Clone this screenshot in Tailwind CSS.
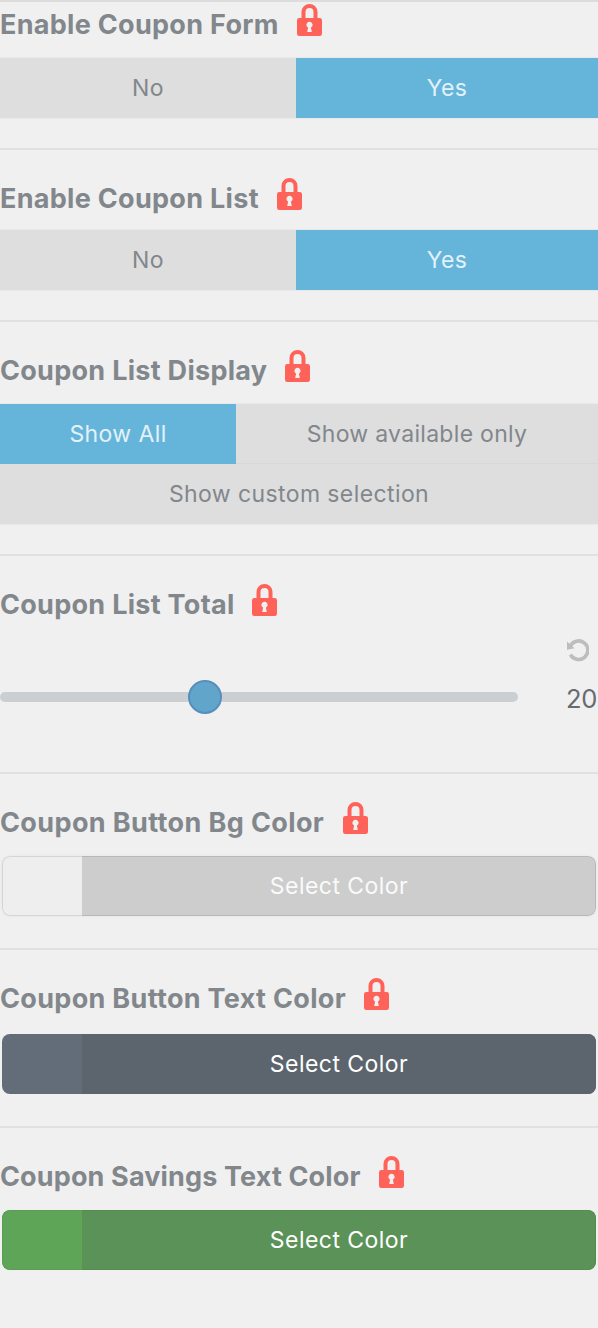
<!DOCTYPE html>
<html lang="en">
<head>
<meta charset="utf-8">
<title>Coupon Settings</title>
<script src="https://cdn.jsdelivr.net/npm/@tailwindcss/browser@4"></script>
</head>
<body class="bg-[#f0f0f0] font-['Inter',sans-serif] text-[#82878c] overflow-hidden">
<svg class="hidden">
  <symbol id="lock" viewBox="0 0 25 32">
    <path fill="#ff6259" fill-rule="evenodd" d="M4.500 14V8a8 8 0 0 1 16 0v6h2.200a2.300 2.300 0 0 1 2.300 2.300v13.400a2.300 2.300 0 0 1-2.300 2.300H2.300A2.300 2.300 0 0 1 0 29.700V16.300A2.300 2.300 0 0 1 2.300 14zM8.500 14h8V8a4 4 0 0 0-8 0zM11.100 23.600L10.200 28h4.600l-.9-4.400a3.100 3.100 0 1 0-2.800 0z"/>
  </symbol>
</svg>
<main class="flex h-[1328px] w-[598px] flex-col text-[23px] tracking-[0.4px]">
  <section class="h-[148px] border-t-2 border-[#dcdcdc] pt-[2px]">
    <h2 class="flex h-[54px] text-[27px] font-[650] leading-[42px] tracking-[0.3px]"><span class="w-[297px] whitespace-nowrap">Enable Coupon Form</span><svg class="h-8 w-[25px]"><use href="#lock"/></svg></h2>
    <div class="flex h-[60px] bg-[#dedede] text-center leading-[60px] shadow-[0_0_1px_1px_#e9e9e9]">
      <div class="w-[296px]">No</div><div class="flex-1 bg-[#65b5db] text-[#e3f1f8]">Yes</div>
    </div>
  </section>
  <section class="h-[172px] border-t-2 border-[#e1e1e1] pt-[28px]">
    <h2 class="flex h-[52px] text-[27px] font-[650] leading-[42px] tracking-[0.3px]"><span class="w-[277px] whitespace-nowrap">Enable Coupon List</span><svg class="h-8 w-[25px]"><use href="#lock"/></svg></h2>
    <div class="flex h-[60px] bg-[#dedede] text-center leading-[60px] shadow-[0_0_1px_1px_#e9e9e9]">
      <div class="w-[296px]">No</div><div class="flex-1 bg-[#65b5db] text-[#e3f1f8]">Yes</div>
    </div>
  </section>
  <section class="h-[234px] border-t-2 border-[#e1e1e1] pt-[28px]">
    <h2 class="flex h-[54px] text-[27px] font-[650] leading-[42px] tracking-[0.29px]"><span class="w-[285px] whitespace-nowrap">Coupon List Display</span><svg class="h-8 w-[25px]"><use href="#lock"/></svg></h2>
    <div class="flex h-[120px] flex-wrap bg-[#dedede] text-center leading-[60px] shadow-[0_0_1px_1px_#e9e9e9]">
      <div class="h-[60px] w-[236px] bg-[#65b5db] text-[#e3f1f8]">Show All</div><div class="h-[60px] w-[362px] border-b border-[#d8d8d8] tracking-[0.3px]">Show available only</div>
      <div class="h-[60px] w-full">Show custom selection</div>
    </div>
  </section>
  <section class="h-[218px] border-t-2 border-[#e1e1e1] pt-[28px]">
    <h2 class="flex h-[54px] text-[27px] font-[650] leading-[42px] tracking-[0.29px]"><span class="w-[252px] whitespace-nowrap">Coupon List Total</span><svg class="h-8 w-[25px]"><use href="#lock"/></svg></h2>
    <div class="flex h-[24px] justify-end pr-[9px]">
      <svg class="h-6 w-[22px]" viewBox="0 0 22 24"><path d="M3.800 9A9.300 9.300 0 1 1 4 17.600" transform="translate(-.6 -.9)" fill="none" stroke="#bdbdbd" stroke-width="3.600"/><path d="M0 3.500V11.800L7.500 10.200Z" fill="#bdbdbd"/></svg>
    </div>
    <div class="flex h-[70px] items-center">
      <div class="flex h-[10px] w-[518px] items-center rounded-full bg-[#cbcfd2] pl-[188px]"><div class="size-[34px] rounded-full border-2 border-[#568fbb] bg-[#61a5cb]"></div></div>
      <span class="ml-[48px] mt-1 text-[25.5px] tracking-[-0.3px] text-[#666b6f]">20</span>
    </div>
  </section>
  <section class="h-[176px] border-t-2 border-[#e1e1e1] pt-[28px]">
    <h2 class="flex h-[54px] text-[27px] font-[650] leading-[42px] tracking-[0.38px]"><span class="w-[343px] whitespace-nowrap">Coupon Button Bg Color</span><svg class="h-8 w-[25px]"><use href="#lock"/></svg></h2>
    <div class="mx-[2px] flex h-[60px] overflow-hidden rounded-lg bg-[#eeeeee] text-center leading-[58px] text-[#fafafa] shadow-[0_0_2px_1px_#e9e9e9]">
      <div class="w-[80px] rounded-l-lg border border-r-0 border-[#d5d5d5]"></div><div class="flex-1 rounded-r-lg border border-l-0 border-[#b8b8b8] bg-[#cdcdcd] pl-px tracking-[0.45px]">Select Color</div>
    </div>
  </section>
  <section class="h-[178px] border-t-2 border-[#e1e1e1] pt-[28px]">
    <h2 class="flex h-[56px] text-[27px] font-[650] leading-[42px] tracking-[0.32px]"><span class="w-[364px] whitespace-nowrap">Coupon Button Text Color</span><svg class="h-8 w-[25px]"><use href="#lock"/></svg></h2>
    <div class="mx-[2px] flex h-[60px] overflow-hidden rounded-lg bg-[#626d79] text-center leading-[60px] text-white">
      <div class="w-[80px]"></div><div class="flex-1 bg-[#5c656e] tracking-[0.45px]">Select Color</div>
    </div>
  </section>
  <section class="flex-1 border-t-2 border-[#e1e1e1] pt-[28px]">
    <h2 class="flex h-[54px] text-[27px] font-[650] leading-[42px] tracking-[0.14px]"><span class="w-[379px] whitespace-nowrap">Coupon Savings Text Color</span><svg class="h-8 w-[25px]"><use href="#lock"/></svg></h2>
    <div class="mx-[2px] flex h-[60px] overflow-hidden rounded-lg bg-[#5fa557] text-center leading-[58px] text-white">
      <div class="w-[80px] rounded-l-lg border border-r-0 border-[#5b9d54]"></div><div class="flex-1 rounded-r-lg border border-l-0 border-[#558a50] bg-[#5b9257] pl-px tracking-[0.45px]">Select Color</div>
    </div>
  </section>
</main>
</body>
</html>
